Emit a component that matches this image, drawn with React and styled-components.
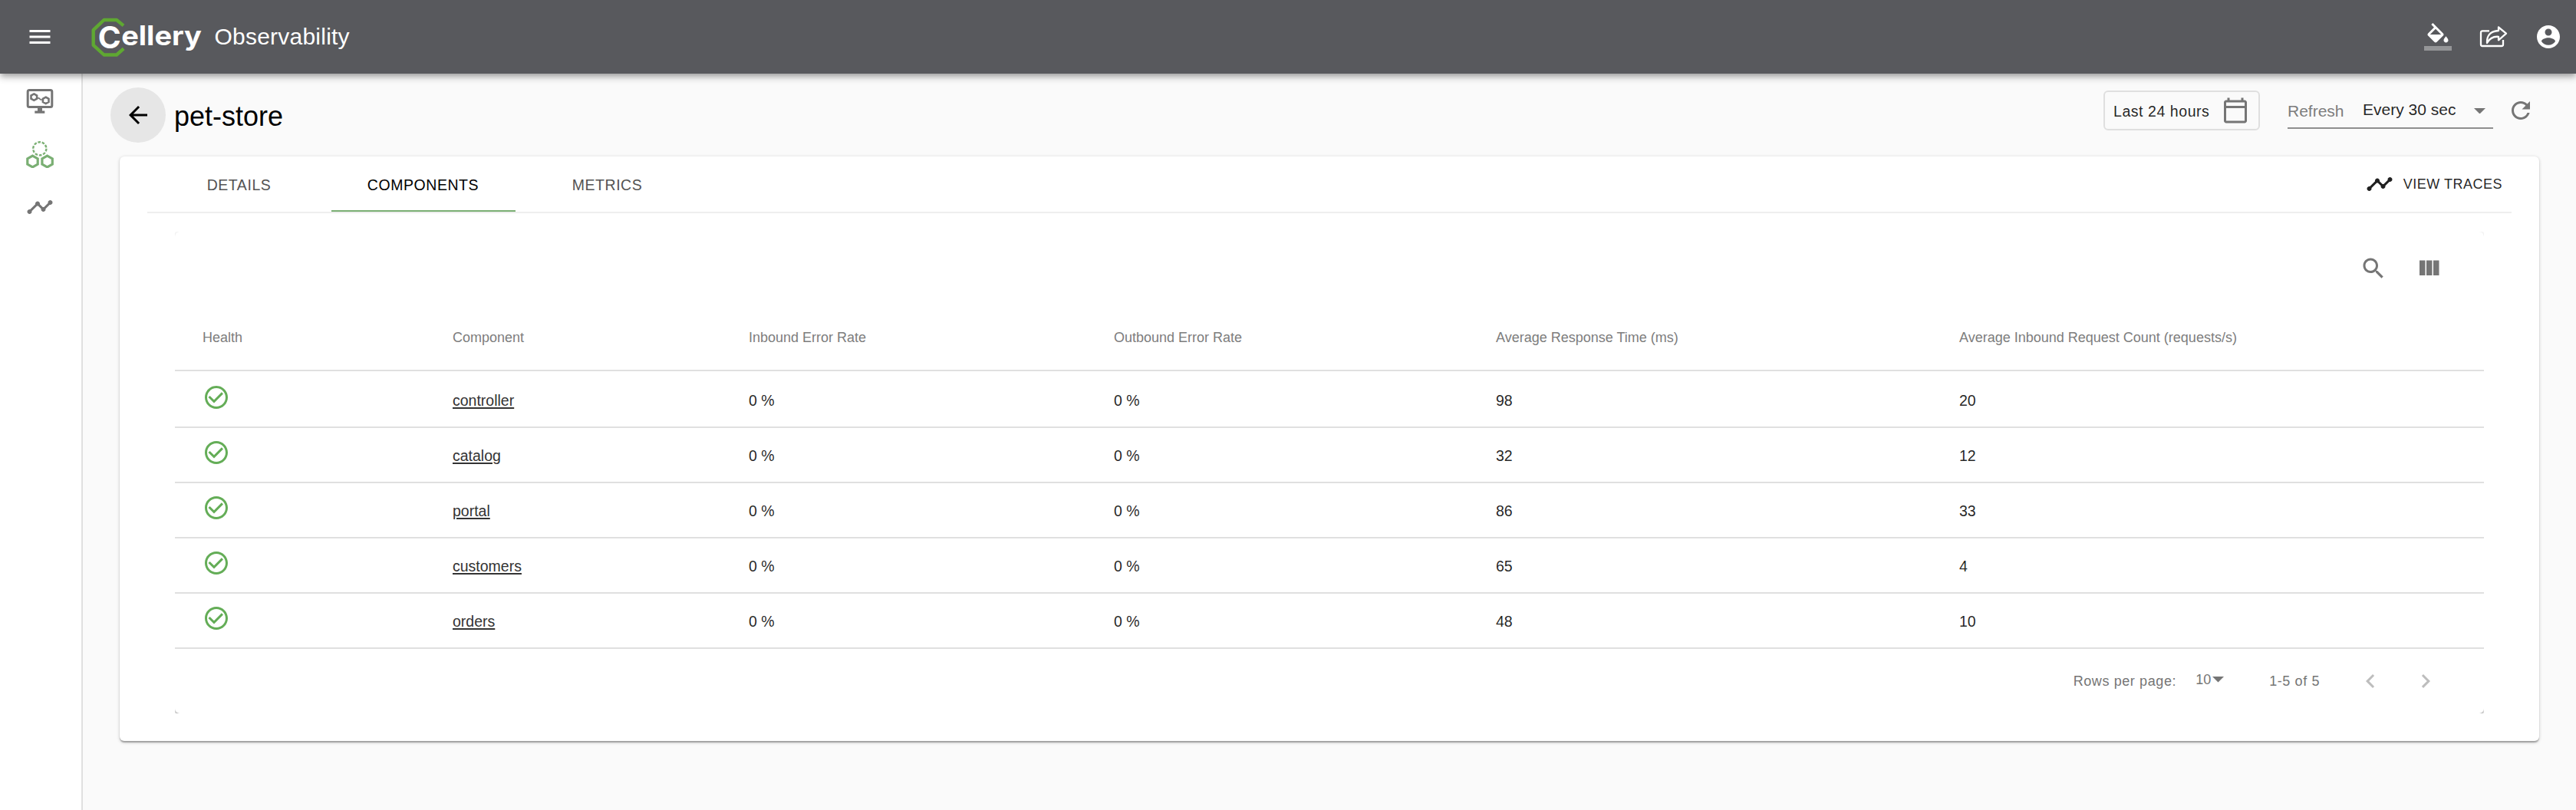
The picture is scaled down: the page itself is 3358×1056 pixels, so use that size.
import React from 'react';
import styled, { createGlobalStyle } from 'styled-components';

const GlobalStyle = createGlobalStyle`
  *, *::before, *::after { box-sizing: border-box; }
  html, body { margin: 0; padding: 0; }
  body {
    background: #fafafa;
    color: rgba(0, 0, 0, 0.87);
    font-family: "Liberation Sans", Arial, Helvetica, sans-serif;
  }
  button { font: inherit; color: inherit; background: none; border: 0; padding: 0; margin: 0; }
`;

const paths = {
  menu: 'M3 18h18v-2H3v2zm0-5h18v-2H3v2zm0-7v2h18V6H3z',
  account:
    'M12 2C6.48 2 2 6.48 2 12s4.48 10 10 10 10-4.48 10-10S17.52 2 12 2zm0 3c1.66 0 3 1.34 3 3s-1.34 3-3 3-3-1.34-3-3 1.34-3 3-3zm0 14.2c-2.5 0-4.71-1.28-6-3.22.03-1.99 4-3.08 6-3.08 1.99 0 5.97 1.09 6 3.08-1.29 1.94-3.5 3.22-6 3.22z',
  back: 'M20 11H7.83l5.59-5.59L12 4l-8 8 8 8 1.41-1.41L7.83 13H20v-2z',
  calendar:
    'M20 3h-1V1h-2v2H7V1H5v2H4c-1.1 0-2 .9-2 2v16c0 1.1.9 2 2 2h16c1.1 0 2-.9 2-2V5c0-1.1-.9-2-2-2zm0 18H4V10h16v11zm0-13H4V5h16v3z',
  refresh:
    'M17.65 6.35C16.2 4.9 14.21 4 12 4c-4.42 0-7.99 3.58-7.99 8s3.57 8 7.99 8c3.73 0 6.84-2.55 7.73-6h-2.08c-.82 2.33-3.04 4-5.65 4-3.31 0-6-2.69-6-6s2.69-6 6-6c1.66 0 3.14.69 4.22 1.78L13 11h7V4l-2.35 2.35z',
  timeline:
    'M23 8c0 1.1-.9 2-2 2-.18 0-.35-.02-.51-.07l-3.56 3.55c.05.16.07.34.07.52 0 1.1-.9 2-2 2s-2-.9-2-2c0-.18.02-.36.07-.52l-2.55-2.55c-.16.05-.34.07-.52.07s-.36-.02-.52-.07l-4.55 4.56c.05.16.07.33.07.51 0 1.1-.9 2-2 2s-2-.9-2-2 .9-2 2-2c.18 0 .35.02.51.07l4.56-4.55C8.02 9.36 8 9.18 8 9c0-1.1.9-2 2-2s2 .9 2 2c0 .18-.02.36-.07.52l2.55 2.55c.16-.05.34-.07.52-.07s.36.02.52.07l3.55-3.56C19.02 8.35 19 8.18 19 8c0-1.1.9-2 2-2s2 .9 2 2z',
  search:
    'M15.5 14h-.79l-.28-.27C15.41 12.59 16 11.11 16 9.5 16 5.91 13.09 3 9.5 3S3 5.91 3 9.5 5.91 16 9.5 16c1.61 0 3.09-.59 4.23-1.57l.27.28v.79l5 4.99L20.49 19l-4.99-5zm-6 0C7.01 14 5 11.99 5 9.5S7.01 5 9.5 5 14 7.01 14 9.5 11.99 14 9.5 14z',
  columns: 'M10 18h5V5h-5v13zm-6 0h5V5H4v13zM16 5v13h5V5h-5z',
  healthy:
    'M16.59 7.58L10 14.17l-3.59-3.58L5 12l5 5 8-8zM12 2C6.48 2 2 6.48 2 12s4.48 10 10 10 10-4.48 10-10S17.52 2 12 2zm0 18c-4.42 0-8-3.58-8-8s3.58-8 8-8 8 3.58 8 8-3.58 8-8 8z',
  left: 'M15.41 7.41L14 6l-6 6 6 6 1.41-1.41L10.83 12z',
  right: 'M10 6L8.59 7.41 13.17 12l-4.58 4.58L10 18l6-6z',
};

const IconSvg = styled.svg`
  display: block;
  flex: none;
  width: 36px;
  height: 36px;
  fill: currentColor;
`;

const Icon = ({ name }) => (
  <IconSvg viewBox="0 0 24 24" aria-hidden="true">
    <path d={paths[name]} />
  </IconSvg>
);

const CaretSvg = styled.svg`
  display: block;
  flex: none;
  width: 15px;
  height: 7.5px;
  fill: #757575;
`;

const Caret = () => (
  <CaretSvg viewBox="7 10 10 5" aria-hidden="true">
    <path d="M7 10l5 5 5-5z" />
  </CaretSvg>
);

/* ---------- App bar ---------- */

const AppBar = styled.header`
  position: relative;
  z-index: 2;
  display: flex;
  align-items: center;
  height: 96px;
  padding: 0 18px 0 34px;
  background: #58595d;
  color: #fff;
  box-shadow: 0 3px 6px -1.5px rgba(0, 0, 0, 0.2), 0 6px 7.5px rgba(0, 0, 0, 0.14),
    0 1.5px 15px rgba(0, 0, 0, 0.12);
`;

const Logo = styled.svg`
  display: block;
  width: 150px;
  height: 56px;
  margin-left: 43.5px;
  overflow: visible;
`;

const Product = styled.span`
  margin-left: 16px;
  font-size: 30px;
  line-height: 40px;
  letter-spacing: 0.225px;
  white-space: nowrap;
`;

const AppActions = styled.div`
  display: flex;
  align-items: center;
  gap: 36px;
  margin-left: auto;
`;

const CelleryLogo = () => (
  <Logo viewBox="0 0 150 56" role="img" aria-label="Cellery">
    <path
      d="M47 13.4 L38 6 H21.500 L7.700 19.200 V38.800 L21.500 51.500 H38 L47.200 43.300"
      fill="none"
      stroke="#5fa832"
      strokeWidth="4.400"
      strokeLinejoin="round"
    />
    <text fill="#fff" fontFamily="Inter, sans-serif" fontWeight="700">
      <tspan x="13.800" y="43" fontSize="40" textLength="30" lengthAdjust="spacingAndGlyphs">
        C
      </tspan>
      <tspan x="44.200" y="38.800" fontSize="35" textLength="104.800" lengthAdjust="spacingAndGlyphs">
        ellery
      </tspan>
    </text>
  </Logo>
);

const FillIcon = () => (
  <IconSvg viewBox="0 0 24 24" aria-hidden="true">
    <path d="M16.56 8.94L7.62 0 6.21 1.41l2.38 2.38-5.15 5.15c-.59.59-.59 1.54 0 2.12l5.5 5.5c.29.29.68.44 1.06.44s.77-.15 1.06-.44l5.5-5.5c.59-.58.59-1.53 0-2.12zM5.21 10L10 5.21 14.79 10H5.21zM19 11.5s-2 2.17-2 3.5c0 1.1.9 2 2 2s2-.9 2-2c0-1.33-2-3.5-2-3.5z" />
    <path fillOpacity=".36" d="M0 20h24v4H0z" />
  </IconSvg>
);

const ShareIcon = () => (
  <IconSvg viewBox="0 0 36 36" aria-hidden="true" overflow="visible">
    <g fill="none" stroke="currentColor" strokeWidth="2.300" strokeLinejoin="round">
      <path d="M13 10.3H4a2 2 0 0 0-2 2V28a2 2 0 0 0 2 2h25a2 2 0 0 0 2-2v-6" />
      <path d="M25 5.500l10 8.200-10 8.600v-4.500c-7-.6-11.500 1.800-15 8.200C9.500 17 14 10.500 25 10z" />
    </g>
  </IconSvg>
);

/* ---------- Side navigation ---------- */

const Body = styled.div`
  display: flex;
  height: 960px;
`;

const SideNav = styled.nav`
  display: flex;
  flex-direction: column;
  gap: 33px;
  flex: none;
  width: 108px;
  padding: 18px 0 0 34px;
  background: #fff;
  border-right: 2px solid #e0e0e0;
`;

const NavItem = styled.a`
  display: block;
  color: ${(p) => (p.$active ? '#7aaf73' : '#757575')};
`;

const OverviewIcon = () => (
  <IconSvg viewBox="0 0 36 36" aria-hidden="true">
    <g fill="none" stroke="currentColor">
      <rect x="2.200" y="3.500" width="31.600" height="22" rx="2" strokeWidth="3" />
      <g strokeWidth="2.600">
        <path d="M10.300 8.400l3.800 2.100v4.200l-3.800 2.100-3.800-2.100v-4.200z" />
        <path d="M25.700 12.700l3.800 2.100v4.200l-3.800 2.100-3.800-2.100v-4.200z" />
        <path d="M14 13.500l3 .6 2 1.900h3" strokeWidth="1.700" />
      </g>
    </g>
    <path d="M15 26h6v4.500h3.300v3.200H11.300v-3.200H15z" />
  </IconSvg>
);

const CellsIcon = () => (
  <IconSvg viewBox="0 -1 36 36" aria-hidden="true">
    <g fill="none" stroke="currentColor">
      <circle cx="17.800" cy="9.800" r="8.600" strokeWidth="2.400" strokeDasharray="3.600 1.800" />
      <g strokeWidth="3.200">
        <path d="M8.500 19.200l6.700 3.700v7.200l-6.700 3.800-6.700-3.800v-7.200z" />
        <path d="M27.600 19.200l6.700 3.700v7.200l-6.700 3.800-6.700-3.800v-7.200z" />
      </g>
    </g>
  </IconSvg>
);

/* ---------- Page heading ---------- */

const Main = styled.main`
  flex: 1;
  min-width: 0;
`;

const PageBar = styled.div`
  display: flex;
  align-items: center;
  height: 108px;
  padding: 0 54px 0 36px;
`;

const BackButton = styled.button`
  display: grid;
  place-items: center;
  flex: none;
  width: 72px;
  height: 72px;
  border-radius: 50%;
  background: #e6e6e6;
  color: #000;
`;

const Title = styled.h1`
  margin: 0 0 0 11px;
  padding-top: 4px;
  color: #000;
  font-size: 36px;
  font-weight: 400;
  line-height: 48px;
`;

const Controls = styled.div`
  display: flex;
  align-items: flex-start;
  align-self: flex-start;
  margin: 22px 0 0 auto;
`;

const DateButton = styled.button`
  display: flex;
  align-items: center;
  justify-content: space-between;
  width: 204px;
  height: 52px;
  padding: 0 12px 0 11px;
  border: 2px solid #dfdfdf;
  border-radius: 6px;
  font-size: 19.5px;
  letter-spacing: 0.557px;
  white-space: nowrap;

  svg { color: #757575; margin-top: -1px; }
`;

const DateLabel = styled.span`
  padding-top: 2px;
`;

const RefreshSelect = styled.div`
  display: flex;
  align-items: center;
  width: 268px;
  height: 50px;
  margin: 0 18px 0 36px;
  padding-right: 10px;
  border-bottom: 2px solid #8f8f8f;
  font-size: 21px;
  white-space: nowrap;
`;

const RefreshLabel = styled.span`
  width: 98px;
  padding-top: 5px;
  color: #7d7d7d;
`;

const RefreshValue = styled.span`
  flex: 1;
  padding-top: 1px;
`;

const CaretSlot = styled.span`
  padding-top: 5px;
`;

const RefreshButton = styled.button`
  margin-top: 8px;
  color: #757575;
`;

/* ---------- Card and tabs ---------- */

const Card = styled.section`
  margin: 0 48px;
  padding: 0 36px 36px;
  border-radius: 6px;
  background: #fff;
  box-shadow: 0 1.5px 4.5px rgba(0, 0, 0, 0.2), 0 1.5px 1.5px rgba(0, 0, 0, 0.14),
    0 3px 1.5px -1.5px rgba(0, 0, 0, 0.12);
`;

const TabBar = styled.div`
  display: flex;
  height: 74px;
  border-bottom: 2px solid #eee;
`;

const Tab = styled.button`
  width: 240px;
  padding: 4px 1px 0 0;
  border-bottom: 2px solid ${(p) => (p.$active ? '#7aaf73' : 'transparent')};
  color: ${(p) => (p.$active ? '#000' : '#545454')};
  font-size: 19.5px;
  letter-spacing: 0.557px;
`;

const TracesButton = styled.button`
  display: flex;
  align-items: center;
  gap: 13px;
  margin-left: auto;
  padding-right: 12px;
  font-size: 18px;
  letter-spacing: 0.514px;
`;

/* ---------- Table ---------- */

const TableClip = styled.div`
  margin: 24px 36px 0;
  overflow: hidden;
`;

const TablePaper = styled.div`
  border-radius: 6px;
  background: #fff;
  box-shadow: 0 1.5px 4.5px rgba(0, 0, 0, 0.2), 0 1.5px 1.5px rgba(0, 0, 0, 0.14),
    0 3px 1.5px -1.5px rgba(0, 0, 0, 0.12);
`;

const TableToolbar = styled.div`
  display: flex;
  justify-content: flex-end;
  align-items: center;
  height: 96px;
  padding-right: 36px;
`;

const IconButton = styled.button`
  display: grid;
  place-items: center;
  width: 72px;
  height: 72px;
  color: ${(p) => (p.disabled ? '#bdbdbd' : '#757575')};
`;

const Table = styled.table`
  width: 100%;
  table-layout: fixed;
  border-collapse: separate;
  border-spacing: 0;
`;

const HeadCell = styled.th`
  width: ${(p) => p.$width}px;
  height: 86px;
  padding: 0 0 0 36px;
  border-bottom: 2px solid #e0e0e0;
  color: #7d7d7d;
  font-size: 18px;
  font-weight: 400;
  text-align: left;
  white-space: nowrap;
`;

const Row = styled.tr`
  height: 72px;

  &:first-child { height: 74px; }
  &:first-child > td { padding-top: 4px; }
`;

const Cell = styled.td`
  padding: 2px 0 0 36px;
  border-bottom: 2px solid #e0e0e0;
  font-size: 19.5px;
  line-height: 24px;
`;

const Health = styled.div`
  padding-bottom: 8px;
  color: #64ad57;
`;

const NameLink = styled.a`
  color: #333;
  text-decoration: underline;
  text-decoration-thickness: 2px;
  text-underline-offset: 2px;
`;

const Footer = styled.div`
  display: flex;
  align-items: center;
  justify-content: flex-end;
  height: 84px;
  padding-right: 40px;
  color: #757575;
  font-size: 18px;
  letter-spacing: 0.6px;
  white-space: nowrap;
`;

const PageSize = styled.div`
  display: flex;
  align-items: center;
  gap: 2px;
  margin: 0 59px 0 25px;
  padding-bottom: 4px;
  letter-spacing: 0;
`;

const Range = styled.span`
  margin-right: 30px;
`;

const columns = [
  { label: 'Health', width: 326 },
  { label: 'Component', width: 386 },
  { label: 'Inbound Error Rate', width: 476 },
  { label: 'Outbound Error Rate', width: 498 },
  { label: 'Average Response Time (ms)', width: 604 },
  { label: 'Average Inbound Request Count (requests/s)', width: 720 },
];

const components = [
  { name: 'controller', inbound: 0, outbound: 0, time: 98, count: 20 },
  { name: 'catalog', inbound: 0, outbound: 0, time: 32, count: 12 },
  { name: 'portal', inbound: 0, outbound: 0, time: 86, count: 33 },
  { name: 'customers', inbound: 0, outbound: 0, time: 65, count: 4 },
  { name: 'orders', inbound: 0, outbound: 0, time: 48, count: 10 },
];

const tabs = ['DETAILS', 'COMPONENTS', 'METRICS'];

export default function App() {
  return (
    <>
      <GlobalStyle />
      <AppBar>
        <Icon name="menu" />
        <CelleryLogo />
        <Product>Observability</Product>
        <AppActions>
          <FillIcon />
          <ShareIcon />
          <Icon name="account" />
        </AppActions>
      </AppBar>
      <Body>
        <SideNav>
          <NavItem><OverviewIcon /></NavItem>
          <NavItem $active><CellsIcon /></NavItem>
          <NavItem><Icon name="timeline" /></NavItem>
        </SideNav>
        <Main>
          <PageBar>
            <BackButton><Icon name="back" /></BackButton>
            <Title>pet-store</Title>
            <Controls>
              <DateButton>
                <DateLabel>Last 24 hours</DateLabel>
                <Icon name="calendar" />
              </DateButton>
              <RefreshSelect>
                <RefreshLabel>Refresh</RefreshLabel>
                <RefreshValue>Every 30 sec</RefreshValue>
                <CaretSlot><Caret /></CaretSlot>
              </RefreshSelect>
              <RefreshButton><Icon name="refresh" /></RefreshButton>
            </Controls>
          </PageBar>
          <Card>
            <TabBar>
              {tabs.map((tab) => (
                <Tab key={tab} $active={tab === 'COMPONENTS'}>{tab}</Tab>
              ))}
              <TracesButton>
                <Icon name="timeline" />
                VIEW TRACES
              </TracesButton>
            </TabBar>
            <TableClip>
              <TablePaper>
                <TableToolbar>
                  <IconButton><Icon name="search" /></IconButton>
                  <IconButton><Icon name="columns" /></IconButton>
                </TableToolbar>
                <Table>
                  <thead>
                    <tr>
                      {columns.map((c) => (
                        <HeadCell key={c.label} $width={c.width}>{c.label}</HeadCell>
                      ))}
                    </tr>
                  </thead>
                  <tbody>
                    {components.map((c) => (
                      <Row key={c.name}>
                        <Cell><Health><Icon name="healthy" /></Health></Cell>
                        <Cell><NameLink>{c.name}</NameLink></Cell>
                        <Cell>{c.inbound} %</Cell>
                        <Cell>{c.outbound} %</Cell>
                        <Cell>{c.time}</Cell>
                        <Cell>{c.count}</Cell>
                      </Row>
                    ))}
                  </tbody>
                </Table>
                <Footer>
                  <span>Rows per page:</span>
                  <PageSize>10<Caret /></PageSize>
                  <Range>1-5 of 5</Range>
                  <IconButton disabled><Icon name="left" /></IconButton>
                  <IconButton disabled><Icon name="right" /></IconButton>
                </Footer>
              </TablePaper>
            </TableClip>
          </Card>
        </Main>
      </Body>
    </>
  );
}
